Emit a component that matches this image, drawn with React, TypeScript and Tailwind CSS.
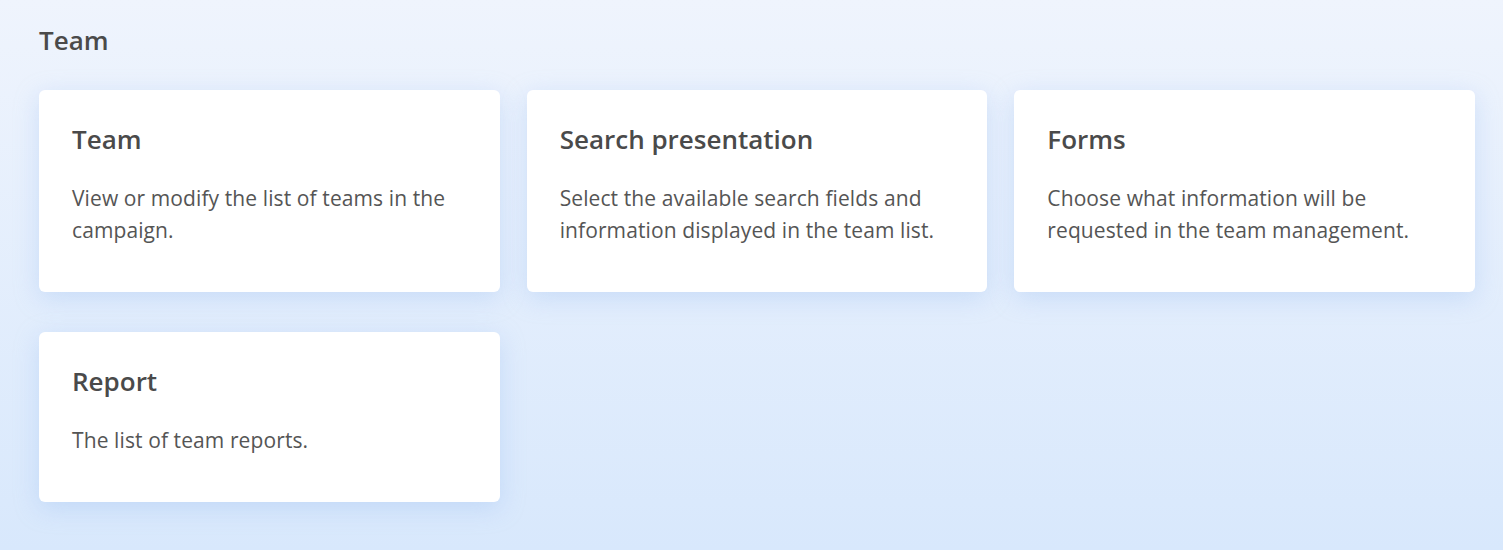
import React from "react";

const cards = [
  { title: "Team", desc: "View or modify the list of teams in the campaign." },
  { title: "Search presentation", desc: "Select the available search fields and information displayed in the team list." },
  { title: "Forms", desc: "Choose what information will be requested in the team management." },
  { title: "Report", desc: "The list of team reports." },
];

export default function App() {
  return (
    <div
      className="min-h-[550px] w-full bg-gradient-to-b from-[#eff4fd] to-[#d8e8fc] pl-[39px] pr-[28px] pt-[24px] pb-[40px] text-[#4a4a4a]"
      style={{ fontFamily: "'Open Sans', 'Noto Sans', sans-serif" }}
    >
      <h1 className="text-[26px] font-semibold leading-[32px] text-[#4a4a4a]">Team</h1>
      <div className="mt-[34px] grid grid-cols-3 gap-x-[27px] gap-y-[40px]">
        {cards.map((c) => (
          <div
            key={c.title}
            className="rounded-[6px] bg-white px-[33px] pt-[33px] pb-[46px] shadow-[0_6px_24px_rgba(150,185,240,0.35)]"
          >
            <h2 className="text-[26px] font-semibold leading-[32px] text-[#4a4a4a]">{c.title}</h2>
            <p className="mt-[27px] text-[21px] leading-[32px] tracking-[0.1px] text-[#555555]">{c.desc}</p>
          </div>
        ))}
      </div>
    </div>
  );
}
